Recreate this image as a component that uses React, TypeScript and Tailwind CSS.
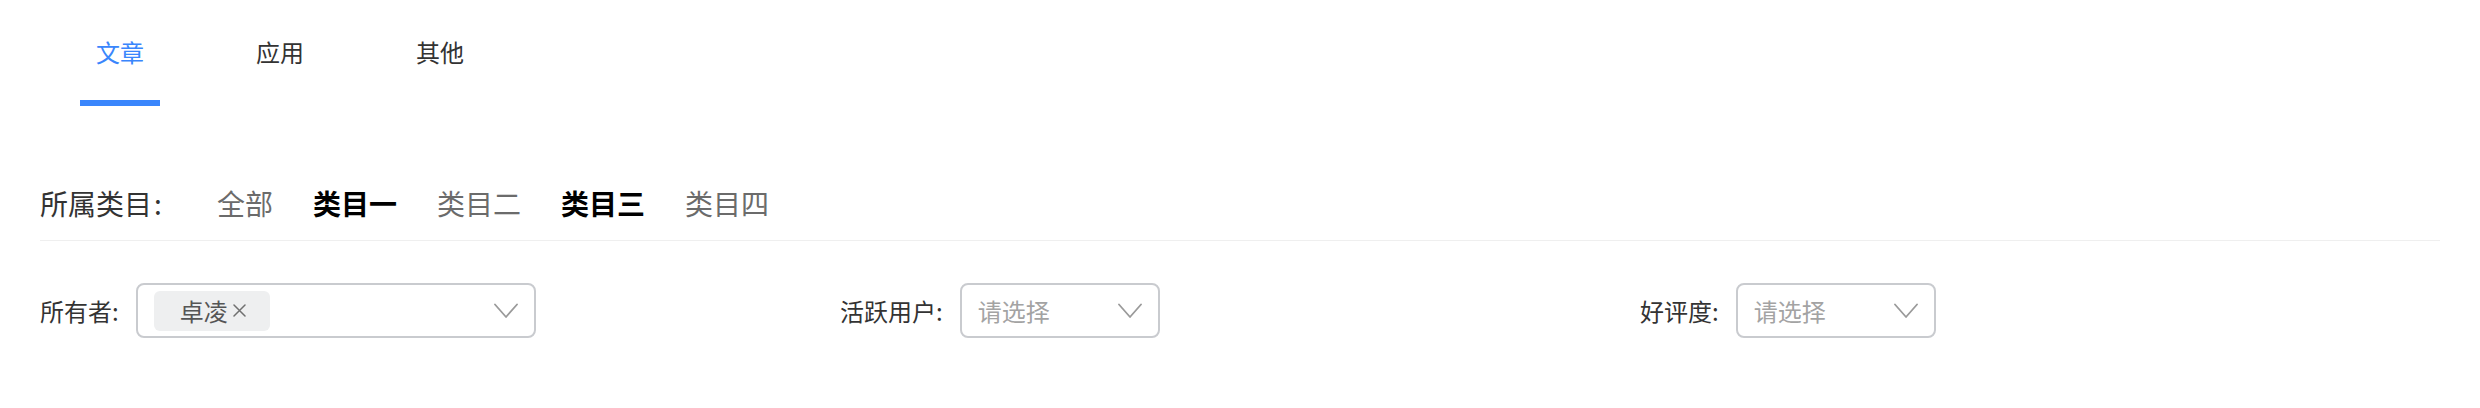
import React from "react";

const font = { fontFamily: '"Noto Sans CJK SC", "Noto Sans", sans-serif' };

function Chevron() {
  return (
    <svg width="24" height="16" viewBox="0 0 24 16" fill="none" className="shrink-0">
      <path d="M1 1.5 L12 14 L23 1.5" stroke="#9a9a9a" strokeWidth="1.8" strokeLinecap="round" strokeLinejoin="round" />
    </svg>
  );
}

function Close() {
  return (
    <svg width="13" height="13" viewBox="0 0 13 13" fill="none" className="shrink-0 ml-[5px]">
      <path d="M1 1 L12 12 M12 1 L1 12" stroke="#707070" strokeWidth="1.5" strokeLinecap="round" />
    </svg>
  );
}

function Select({ width, children }: { width: string; children?: React.ReactNode }) {
  return (
    <div className={`${width} h-[55px] border-2 border-[#c9cbcf] rounded-[8px] flex items-center pl-[16px] pr-[16px] bg-white`}>
      <div className="flex-1 flex items-center">{children}</div>
      <Chevron />
    </div>
  );
}

export default function App() {
  const cats = [
    { t: "全部", b: false },
    { t: "类目一", b: true },
    { t: "类目二", b: false },
    { t: "类目三", b: true },
    { t: "类目四", b: false },
  ];
  return (
    <div className="w-[2480px] h-[408px] bg-white" style={font}>
      {/* Tabs */}
      <div className="flex pl-[40px] pt-[36px]">
        {[
          { t: "文章", a: true },
          { t: "应用", a: false },
          { t: "其他", a: false },
        ].map((tab) => (
          <div key={tab.t} className="w-[160px] flex flex-col items-center">
            <div className={`text-[24px] leading-[32px] ${tab.a ? "text-[#3a86fc]" : "text-[#333333]"}`}>{tab.t}</div>
            <div className={`mt-[32px] h-[6px] w-[80px] ${tab.a ? "bg-[#3a86fc]" : "bg-transparent"}`} />
          </div>
        ))}
      </div>

      <div className="px-[40px]">
        {/* Category row */}
        <div className="mt-[77px] flex items-center h-[40px]">
          <div className="w-[177px] text-[28px] leading-[40px] text-[#333333] flex">
            <span>所属类目</span>
            <span className="ml-[2px]">:</span>
          </div>
          <div className="flex gap-[40px]">
            {cats.map((c) => (
              <div
                key={c.t}
                className={`text-[28px] leading-[40px] ${c.b ? "font-bold text-[#000000]" : "text-[#6b6b6b]"}`}
              >
                {c.t}
              </div>
            ))}
          </div>
        </div>
        <div className="mt-[17px] h-px bg-[#efefef]" />

        {/* Form row */}
        <div className="mt-[42px] grid grid-cols-3">
          <div className="flex items-center">
            <div className="text-[24px] text-[#333333] mr-[17px]">所有者:</div>
            <Select width="w-[400px]">
              <div className="h-[40px] rounded-[6px] bg-[#eeeff0] flex items-center pl-[26px] pr-[24px] text-[24px] text-[#555555]">
                <span>卓凌</span>
                <Close />
              </div>
            </Select>
          </div>
          <div className="flex items-center">
            <div className="text-[24px] text-[#333333] mr-[17px]">活跃用户:</div>
            <Select width="w-[200px]">
              <span className="text-[24px] text-[#a3a3a3]">请选择</span>
            </Select>
          </div>
          <div className="flex items-center">
            <div className="text-[24px] text-[#333333] mr-[17px]">好评度:</div>
            <Select width="w-[200px]">
              <span className="text-[24px] text-[#a3a3a3]">请选择</span>
            </Select>
          </div>
        </div>
      </div>
    </div>
  );
}
